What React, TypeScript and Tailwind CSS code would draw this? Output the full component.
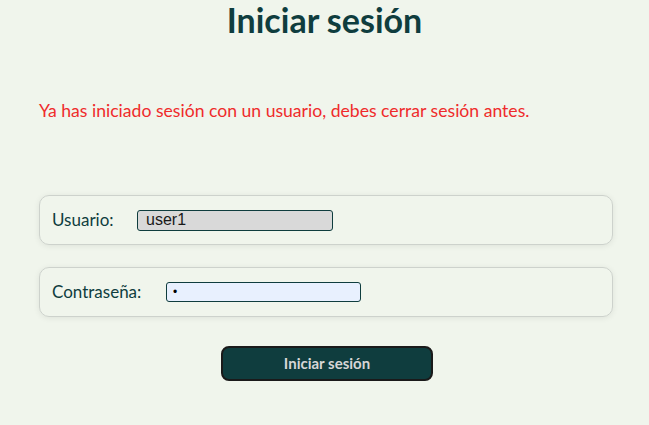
import { useState } from "react";

const Login = () => {
  const [user, setUser] = useState("user1");
  const [pass, setPass] = useState("a");

  return (
    <div className="min-h-[425px] bg-[#f0f5ec] font-['Lato','Open_Sans',sans-serif] text-[#0f3d3e]">
      <h1 className="text-center text-[34px] font-bold leading-[40px]">Iniciar sesión</h1>
      <p className="mt-[59px] ml-[39px] text-[17.6px] leading-[24px] text-[#ef2b2b]">
        Ya has iniciado sesión con un usuario, debes cerrar sesión antes.
      </p>
      <form className="mt-[72px] ml-[39px] w-[574px] flex flex-col gap-[22px]">
        <div className="h-[50px] flex items-center px-[12px] rounded-[10px] border border-[#cdd2cc] shadow-[0_1px_6px_rgba(0,0,0,0.08)]">
          <label className="text-[17px] w-[85px]">Usuario:</label>
          <input
            value={user}
            onChange={(e) => setUser(e.target.value)}
            disabled
            className="w-[196px] h-[21px] px-[8px] rounded-[3px] border border-[#0f3d3e] bg-[#d9d9d9] text-[16px] text-[#1a1a1a] font-['Liberation_Sans',sans-serif] leading-none"
          />
        </div>
        <div className="h-[50px] flex items-center px-[12px] rounded-[10px] border border-[#cdd2cc] shadow-[0_1px_6px_rgba(0,0,0,0.08)]">
          <label className="text-[17px] w-[114px]">Contraseña:</label>
          <input
            type="password"
            value={pass}
            onChange={(e) => setPass(e.target.value)}
            className="w-[195px] h-[20px] px-[6px] rounded-[3px] border border-[#0f3d3e] bg-[#e8f0fe] text-[12px] text-black font-['Liberation_Sans',sans-serif] leading-none outline-none"
          />
        </div>
        <div className="flex justify-center pl-[2px] mt-[7px]">
          <button
            type="button"
            className="w-[212px] h-[35px] rounded-[8px] border-2 border-[#1a1a1a] bg-[#0f3d3e] text-[15px] font-bold text-[#d6d6d6]"
          >
            Iniciar sesión
          </button>
        </div>
      </form>
    </div>
  );
};

export default Login;
